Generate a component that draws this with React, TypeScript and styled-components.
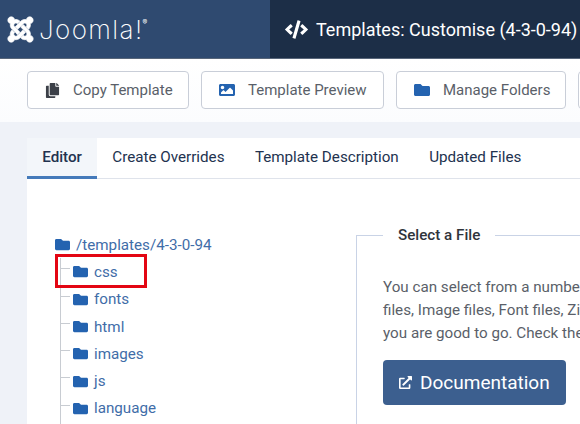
import React from "react";
import styled, { createGlobalStyle } from "styled-components";
import { FaCode, FaCopy, FaExternalLinkAlt, FaFolder, FaImage, FaJoomla } from "react-icons/fa";

const GlobalStyle = createGlobalStyle`
  html, body {
    margin: 0;
    height: 100%;
    overflow: hidden;
    background: #eff2f8;
    font-family: Roboto, "Liberation Sans", sans-serif;
  }
`;

const Page = styled.div`
  width: 580px;
  height: 424px;
  overflow: hidden;
  position: relative;
`;

const Header = styled.header`
  display: flex;
  height: 58px;
  border-bottom: 1px solid #58667a;
`;

const Brand = styled.div`
  display: flex;
  align-items: center;
  gap: 4px;
  width: 270px;
  padding-left: 6px;
  box-sizing: border-box;
  background: #2f4a70;
  color: #fff;
  flex: none;

  svg {
    stroke: currentColor;
    stroke-width: 12px;
  }
`;

const BrandName = styled.span`
  font-family: Inter, sans-serif;
  font-weight: 200;
  font-size: 26px;
  letter-spacing: 1.4px;
`;

const BrandMark = styled.sup`
  font-size: 7px;
  font-weight: 400;
  letter-spacing: 0;
  margin-left: -1px;
  vertical-align: 14px;
  line-height: 0;
`;

const TitleBar = styled.div`
  flex: 1;
  display: flex;
  align-items: center;
  gap: 8px;
  padding-left: 15px;
  background: #1c2e47;
  color: #fff;
  font-size: 18px;
  white-space: nowrap;
  overflow: hidden;
`;

const Toolbar = styled.div`
  display: flex;
  gap: 12px;
  height: 63px;
  padding: 12px 0 0 27px;
  box-sizing: border-box;
  background: linear-gradient(#fff, #fbfcfe);
`;

const ToolButton = styled.button<{ $width: number; $iconColor: string }>`
  flex: none;
  display: flex;
  align-items: center;
  gap: 13px;
  width: ${(p) => p.$width}px;
  height: 38px;
  padding: 0 0 0 17px;
  border: 1px solid #c9ced8;
  border-radius: 4px;
  background: #fff;
  color: #5a5f69;
  font: 400 15px Roboto, sans-serif;
  white-space: nowrap;

  svg {
    color: ${(p) => p.$iconColor};
    flex: none;
  }
`;

const Content = styled.main`
  padding: 16px 0 0 27px;
`;

const Card = styled.section`
  width: 640px;
  height: 300px;
  background: #fff;
`;

const Tabs = styled.nav`
  display: flex;
  height: 41px;
  border-bottom: 1px solid #dfe3eb;
  box-sizing: border-box;
`;

const Tab = styled.div<{ $active?: boolean }>`
  display: flex;
  align-items: center;
  padding: 0 15.2px;
  height: 41px;
  box-sizing: border-box;
  font-size: 15.2px;
  font-weight: ${(p) => (p.$active ? 500 : 400)};
  color: #22324f;
  background: ${(p) => (p.$active ? "#f3f6fa" : "transparent")};
  border-bottom: ${(p) => (p.$active ? "3px solid #457aba" : "none")};
  padding-bottom: ${(p) => (p.$active ? "0" : "3px")};
`;

const Columns = styled.div`
  display: flex;
  padding-top: 52px;
`;

const TreeColumn = styled.div`
  width: 329px;
  flex: none;
  padding-left: 28px;
  box-sizing: border-box;
`;

const TreeRow = styled.div<{ $child?: boolean }>`
  display: flex;
  align-items: center;
  gap: 6px;
  height: 27.3px;
  font-size: 15.2px;
  color: #3f6da8;

  svg {
    color: #2463b0;
    flex: none;
  }

  ${(p) =>
    p.$child &&
    `
    position: relative;
    padding-left: 18px;
    &::before {
      content: "";
      position: absolute;
      left: 5px;
      top: 10px;
      width: 10px;
      border-top: 1px solid #c8ccd2;
    }
  `}
`;

const TreeChildren = styled.div`
  position: relative;

  &::before {
    content: "";
    position: absolute;
    left: 5px;
    top: 0;
    bottom: -20px;
    border-left: 1px solid #c8ccd2;
  }
`;

const Highlight = styled.div`
  position: absolute;
  left: 55px;
  top: 254px;
  width: 92px;
  height: 34px;
  box-sizing: border-box;
  border: 3px solid #e30613;
`;

const FileBox = styled.fieldset`
  margin: -5px 0 0;
  padding: 32px 0 0 26px;
  width: 400px;
  height: 220px;
  box-sizing: border-box;
  border: 1px solid #c9d3e6;
  border-right: none;
  border-bottom: none;
  min-width: 0;
`;

const FileLegend = styled.legend`
  margin-left: 0;
  padding: 0 15px;
  font-size: 15.2px;
  font-weight: 500;
  color: #30343b;
`;

const Intro = styled.p`
  margin: 0;
  font-size: 15.2px;
  line-height: 23px;
  color: #5a5f69;
  white-space: nowrap;
`;

const DocButton = styled.button`
  display: flex;
  align-items: center;
  gap: 8px;
  margin-top: 15px;
  width: 183px;
  height: 45px;
  padding: 0 0 0 16px;
  border: none;
  border-radius: 4px;
  background: #3c5f8f;
  color: #fff;
  font: 400 19px Roboto, sans-serif;
`;

const folders = ["css", "fonts", "html", "images", "js", "language", "scss"];

export default function App() {
  return (
    <Page>
      <GlobalStyle />
      <Header>
        <Brand>
          <FaJoomla size={29} />
          <BrandName>
            Joomla!<BrandMark>®</BrandMark>
          </BrandName>
        </Brand>
        <TitleBar>
          <FaCode size={23} />
          Templates: Customise (4-3-0-94)
        </TitleBar>
      </Header>
      <Toolbar>
        <ToolButton $width={162} $iconColor="#3c4048">
          <FaCopy size={15} />
          Copy Template
        </ToolButton>
        <ToolButton $width={183} $iconColor="#2463b0">
          <FaImage size={16} />
          Template Preview
        </ToolButton>
        <ToolButton $width={170} $iconColor="#2463b0">
          <FaFolder size={16} />
          Manage Folders
        </ToolButton>
        <ToolButton $width={120} $iconColor="#2463b0" />
      </Toolbar>
      <Content>
        <Card>
          <Tabs>
            <Tab $active>Editor</Tab>
            <Tab>Create Overrides</Tab>
            <Tab>Template Description</Tab>
            <Tab>Updated Files</Tab>
          </Tabs>
          <Columns>
            <TreeColumn>
              <TreeRow>
                <FaFolder size={15} />
                /templates/4-3-0-94
              </TreeRow>
              <TreeChildren>
                {folders.map((name) => (
                  <TreeRow key={name} $child>
                    <FaFolder size={15} />
                    {name}
                  </TreeRow>
                ))}
              </TreeChildren>
            </TreeColumn>
            <FileBox>
              <FileLegend>Select a File</FileLegend>
              <Intro>
                You can select from a number of template
                <br />
                files, Image files, Font files, Zip files and
                <br />
                you are good to go. Check the documentation
              </Intro>
              <DocButton>
                <FaExternalLinkAlt size={13} />
                Documentation
              </DocButton>
            </FileBox>
          </Columns>
        </Card>
      </Content>
      <Highlight />
    </Page>
  );
}
